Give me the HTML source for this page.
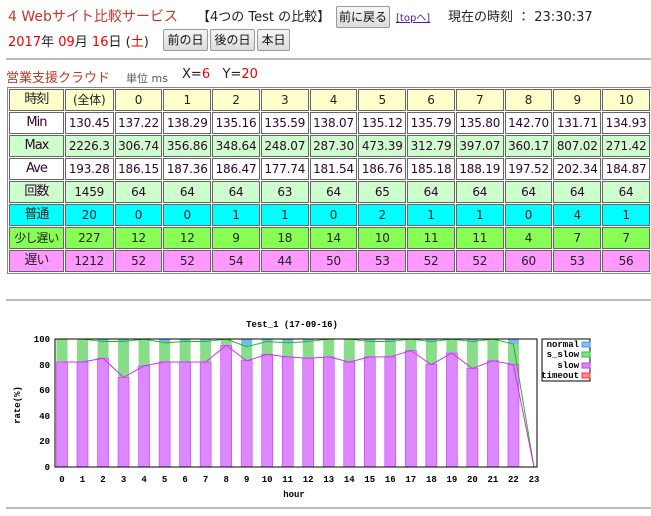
<!DOCTYPE html>
<html><head><meta charset="utf-8">
<style>
body{margin:0;background:#fff;font-family:"DejaVu Sans","Noto Sans CJK JP",sans-serif;font-size:13px;color:#222;width:651px;height:516px;overflow:hidden;position:relative}
.a{position:absolute;white-space:nowrap}
.btn{position:absolute;border:1px solid #999;background:linear-gradient(#f6f6f6,#dcdcdc);border-radius:2px;font-size:12px;height:20px;line-height:20px;text-align:center;color:#111}
.red{color:#e00}
table{position:absolute;left:7px;top:87px;border-collapse:separate;border-spacing:1px;border:1px solid #888;background:#fff;table-layout:fixed;width:645px}
td{border:1px solid #666;height:20px;line-height:20px;padding:0;text-align:center;font-size:12px;color:#303;white-space:nowrap;overflow:hidden;letter-spacing:-0.2px}
td.f{font-size:13px;letter-spacing:-1px}
tr.h td{background:#ffffcc;color:#222}
tr.m td{background:#ccffcc}
tr.c td{background:#00ffff;color:#222}
tr.s td{background:#88ff55;color:#222}
tr.o td{background:#ff99ff;color:#222}
hr{position:absolute;left:6px;width:645px;margin:0;border:0;border-top:2px solid #bbb}
</style></head><body>
<div class="a" style="left:8px;top:6px;font-size:14px;color:#c0392b">4 Webサイト比較サービス</div>
<div class="a" style="left:197px;top:6px;font-size:13px">【4つの Test の比較】</div>
<div class="btn" style="left:336px;top:6px;width:52px">前に戻る</div>
<div class="a" style="left:396px;top:9px;font-size:10px;color:#551a8b;text-decoration:underline">[topへ]</div>
<div class="a" style="left:448px;top:6px;font-size:13px">現在の時刻 ： 23:30:37</div>
<div class="a" style="left:8px;top:31px;font-size:13px"><span class="red">2017</span>年 <span class="red">09</span>月 <span class="red">16</span>日 (<span class="red">土</span>)</div>
<div class="btn" style="left:163px;top:29px;width:43px">前の日</div>
<div class="btn" style="left:210px;top:29px;width:43px">後の日</div>
<div class="btn" style="left:257px;top:29px;width:31px">本日</div>
<hr style="top:58px">
<div class="a" style="left:6px;top:67px;font-size:13px;color:#c0392b">営業支援クラウド</div>
<div class="a" style="left:126px;top:70px;font-size:11px;color:#555">単位 ms</div>
<div class="a" style="left:182px;top:67px;font-size:13px">X=<span class="red">6</span>&nbsp;&nbsp; Y=<span class="red">20</span></div>
<table>
<colgroup><col style="width:54px"><col style="width:48px"><col span="11" style="width:47px"></colgroup>
<tr class="h"><td class="f">時刻</td><td>(全体)</td><td>0</td><td>1</td><td>2</td><td>3</td><td>4</td><td>5</td><td>6</td><td>7</td><td>8</td><td>9</td><td>10</td></tr>
<tr><td class="f">Min</td><td>130.45</td><td>137.22</td><td>138.29</td><td>135.16</td><td>135.59</td><td>138.07</td><td>135.12</td><td>135.79</td><td>135.80</td><td>142.70</td><td>131.71</td><td>134.93</td></tr>
<tr class="m"><td class="f">Max</td><td>2226.3</td><td>306.74</td><td>356.86</td><td>348.64</td><td>248.07</td><td>287.30</td><td>473.39</td><td>312.79</td><td>397.07</td><td>360.17</td><td>807.02</td><td>271.42</td></tr>
<tr><td class="f">Ave</td><td>193.28</td><td>186.15</td><td>187.36</td><td>186.47</td><td>177.74</td><td>181.54</td><td>186.76</td><td>185.18</td><td>188.19</td><td>197.52</td><td>202.34</td><td>184.87</td></tr>
<tr class="m"><td class="f">回数</td><td>1459</td><td>64</td><td>64</td><td>64</td><td>63</td><td>64</td><td>65</td><td>64</td><td>64</td><td>64</td><td>64</td><td>64</td></tr>
<tr class="c"><td class="f">普通</td><td>20</td><td>0</td><td>0</td><td>1</td><td>1</td><td>0</td><td>2</td><td>1</td><td>1</td><td>0</td><td>4</td><td>1</td></tr>
<tr class="s"><td class="f" style="font-size:12px">少し遅い</td><td>227</td><td>12</td><td>12</td><td>9</td><td>18</td><td>14</td><td>10</td><td>11</td><td>11</td><td>4</td><td>7</td><td>7</td></tr>
<tr class="o"><td class="f">遅い</td><td>1212</td><td>52</td><td>52</td><td>54</td><td>44</td><td>50</td><td>53</td><td>52</td><td>52</td><td>60</td><td>53</td><td>56</td></tr>
</table>
<hr style="top:299px">
<svg class="a" style="left:0;top:0" width="651" height="516" font-family="Liberation Mono,monospace" font-size="9" font-weight="bold" fill="#000">
<g id="bars"></g>
<rect x="55" y="339" width="482" height="128" fill="none" stroke="#000" stroke-width="1"/>
<text x="292" y="327" text-anchor="middle">Test_1 (17-09-16)</text>
<g text-anchor="end">
<text x="50" y="342">100</text><text x="50" y="368">80</text><text x="50" y="393">60</text><text x="50" y="419">40</text><text x="50" y="444">20</text><text x="50" y="470">0</text>
</g>
<text transform="translate(20,405) rotate(-90)" text-anchor="middle">rate(%)</text>
<g text-anchor="middle"><text x="62" y="482">0</text><text x="82.5" y="482">1</text><text x="103" y="482">2</text><text x="123.6" y="482">3</text><text x="144.1" y="482">4</text><text x="164.6" y="482">5</text><text x="185.1" y="482">6</text><text x="205.6" y="482">7</text><text x="226.2" y="482">8</text><text x="246.7" y="482">9</text><text x="267.2" y="482">10</text><text x="287.7" y="482">11</text><text x="308.2" y="482">12</text><text x="328.8" y="482">13</text><text x="349.3" y="482">14</text><text x="369.8" y="482">15</text><text x="390.3" y="482">16</text><text x="410.8" y="482">17</text><text x="431.4" y="482">18</text><text x="451.9" y="482">19</text><text x="472.4" y="482">20</text><text x="492.9" y="482">21</text><text x="513.4" y="482">22</text><text x="534" y="482">23</text></g>
<text x="294" y="497" text-anchor="middle">hour</text>
<rect x="542" y="339" width="48" height="42" fill="#fff" stroke="#000"/>
<g text-anchor="end"><text x="579" y="347">normal</text><text x="579" y="357">s_slow</text><text x="579" y="368">slow</text><text x="579" y="378">timeout</text></g>
<rect x="582" y="342" width="8" height="5" fill="#88bbff" stroke="#4499ee"/>
<rect x="582" y="352" width="8" height="5" fill="#88dd88" stroke="#22cc22"/>
<rect x="582" y="363" width="8" height="5" fill="#dd88ff" stroke="#cc33ff"/>
<rect x="582" y="373" width="8" height="5" fill="#ff8888" stroke="#ff3333"/>
</svg>
<hr style="top:507px">
<script>
var s=[82,82,85,70,79,82,82,82,95,83,88,86,85,86,82,86,86,91,80,89,77,83,80,0];
var g=[100,100,98,98,100,97,98,98,100,94,98,97,98,100,100,98,98,100,98,100,98,100,96,0];
var Y=function(p){return 467-1.28*p},h='',ps='',pg='';
for(var i=0;i<24;i++){var x=62+20.52*i;
if(i<23){h+='<rect x="'+(x-5.5)+'" y="'+Y(100)+'" width="11" height="'+(Y(g[i])-Y(100))+'" fill="#77bbee"/>';
h+='<rect x="'+(x-5.5)+'" y="'+Y(g[i])+'" width="11" height="'+(Y(s[i])-Y(g[i]))+'" fill="#88dd88"/>';
h+='<rect x="'+(x-5.5)+'" y="'+Y(s[i])+'" width="11" height="'+(467-Y(s[i]))+'" fill="#dd88ff" stroke="#cc33ff" stroke-width="0.6"/>';}
ps+=x+','+Y(s[i])+' ';pg+=x+','+Y(g[i])+' ';}
h+='<polyline points="'+pg+'" fill="none" stroke="#22bb22" stroke-width="1"/>';
h+='<polyline points="'+ps+'" fill="none" stroke="#cc33ff" stroke-width="1"/>';
document.getElementById('bars').innerHTML=h;
</script>
</body></html>
